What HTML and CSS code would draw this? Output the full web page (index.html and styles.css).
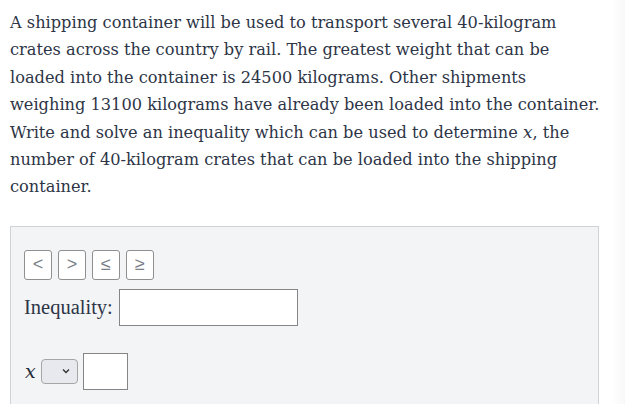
FILE: index.html
```html
<!DOCTYPE html>
<html>
<head>
<meta charset="utf-8">
<link rel="stylesheet" href="styles.css">
</head>
<body>
<div class="page">
  <p class="problem">A shipping container will be used to transport several 40-kilogram<br>crates across the country by rail. The greatest weight that can be<br>loaded into the container is 24500 kilograms. Other shipments<br>weighing 13100 kilograms have already been loaded into the container.<br>Write and solve an inequality which can be used to determine <span class="math">x</span>, the<br>number of 40-kilogram crates that can be loaded into the shipping<br>container.</p>
  <div class="panel">
    <div class="symbols">
      <button class="sym">&lt;</button>
      <button class="sym">&gt;</button>
      <button class="sym">&le;</button>
      <button class="sym">&ge;</button>
    </div>
    <div class="ineq-row">
      <span class="label">Inequality:</span>
      <span class="field wide"></span>
    </div>
    <div class="answer-row">
      <span class="math var">x</span>
      <span class="select"><svg width="8" height="6" viewBox="0 0 8 6"><path d="M1 1.5 L4 4.5 L7 1.5" fill="none" stroke="#333" stroke-width="1.4"/></svg></span>
      <span class="field small"></span>
    </div>
  </div>
</div>
<div class="edge"></div>
</body>
</html>
```

FILE: styles.css
```css
html, body {
  margin: 0;
  padding: 0;
  background: #ffffff;
  overflow: hidden;
}
body {
  width: 625px;
  height: 404px;
  position: relative;
}
.page {
  padding: 0 0 0 10px;
}
.problem {
  margin: 0;
  padding-top: 9px;
  font-family: "DejaVu Serif", serif;
  font-size: 16.2px;
  line-height: 27.4px;
  color: #2d3546;
  white-space: nowrap;
}
.math {
  font-family: "DejaVu Serif", serif;
  font-style: italic;
  font-size: 17px;
  line-height: 1;
}
.panel {
  margin-top: 25px;
  width: 589px;
  height: 182px;
  background: #f3f4f6;
  border: 1px solid #cfd3d8;
  border-bottom: none;
  padding: 23px 0 0 13px;
  box-sizing: border-box;
}
.symbols {
  display: flex;
  gap: 6px;
}
.sym {
  width: 28px;
  height: 30px;
  box-sizing: border-box;
  border: 1px solid #8f8f8f;
  border-radius: 3px;
  background: #ffffff;
  color: #7a7f88;
  font-family: "Liberation Sans", sans-serif;
  font-size: 18px;
  padding: 0;
  display: flex;
  align-items: center;
  justify-content: center;
}
.ineq-row {
  display: flex;
  align-items: center;
  gap: 6px;
  margin-top: 9px;
}
.label {
  font-family: "Liberation Serif", serif;
  font-size: 20.5px;
  color: #2d3546;
}
.field {
  display: block;
  background: #ffffff;
  border: 1px solid #858585;
  box-sizing: border-box;
  height: 37px;
}
.wide {
  width: 179px;
}
.small {
  width: 45px;
}
.answer-row {
  display: flex;
  align-items: center;
  gap: 5px;
  margin-top: 27px;
}
.var {
  font-size: 19px;
  color: #1f2937;
  margin-left: 1px;
}
.select {
  width: 37px;
  height: 25px;
  box-sizing: border-box;
  border: 1px solid #a6a6a6;
  border-radius: 4px;
  background: #e8e9ee;
  display: flex;
  align-items: center;
  justify-content: flex-end;
  padding-right: 7px;
}
.edge {
  position: absolute;
  top: 0;
  right: 0;
  width: 14px;
  height: 404px;
  background: linear-gradient(to right, #ffffff, #f8f8f8);
}
```
